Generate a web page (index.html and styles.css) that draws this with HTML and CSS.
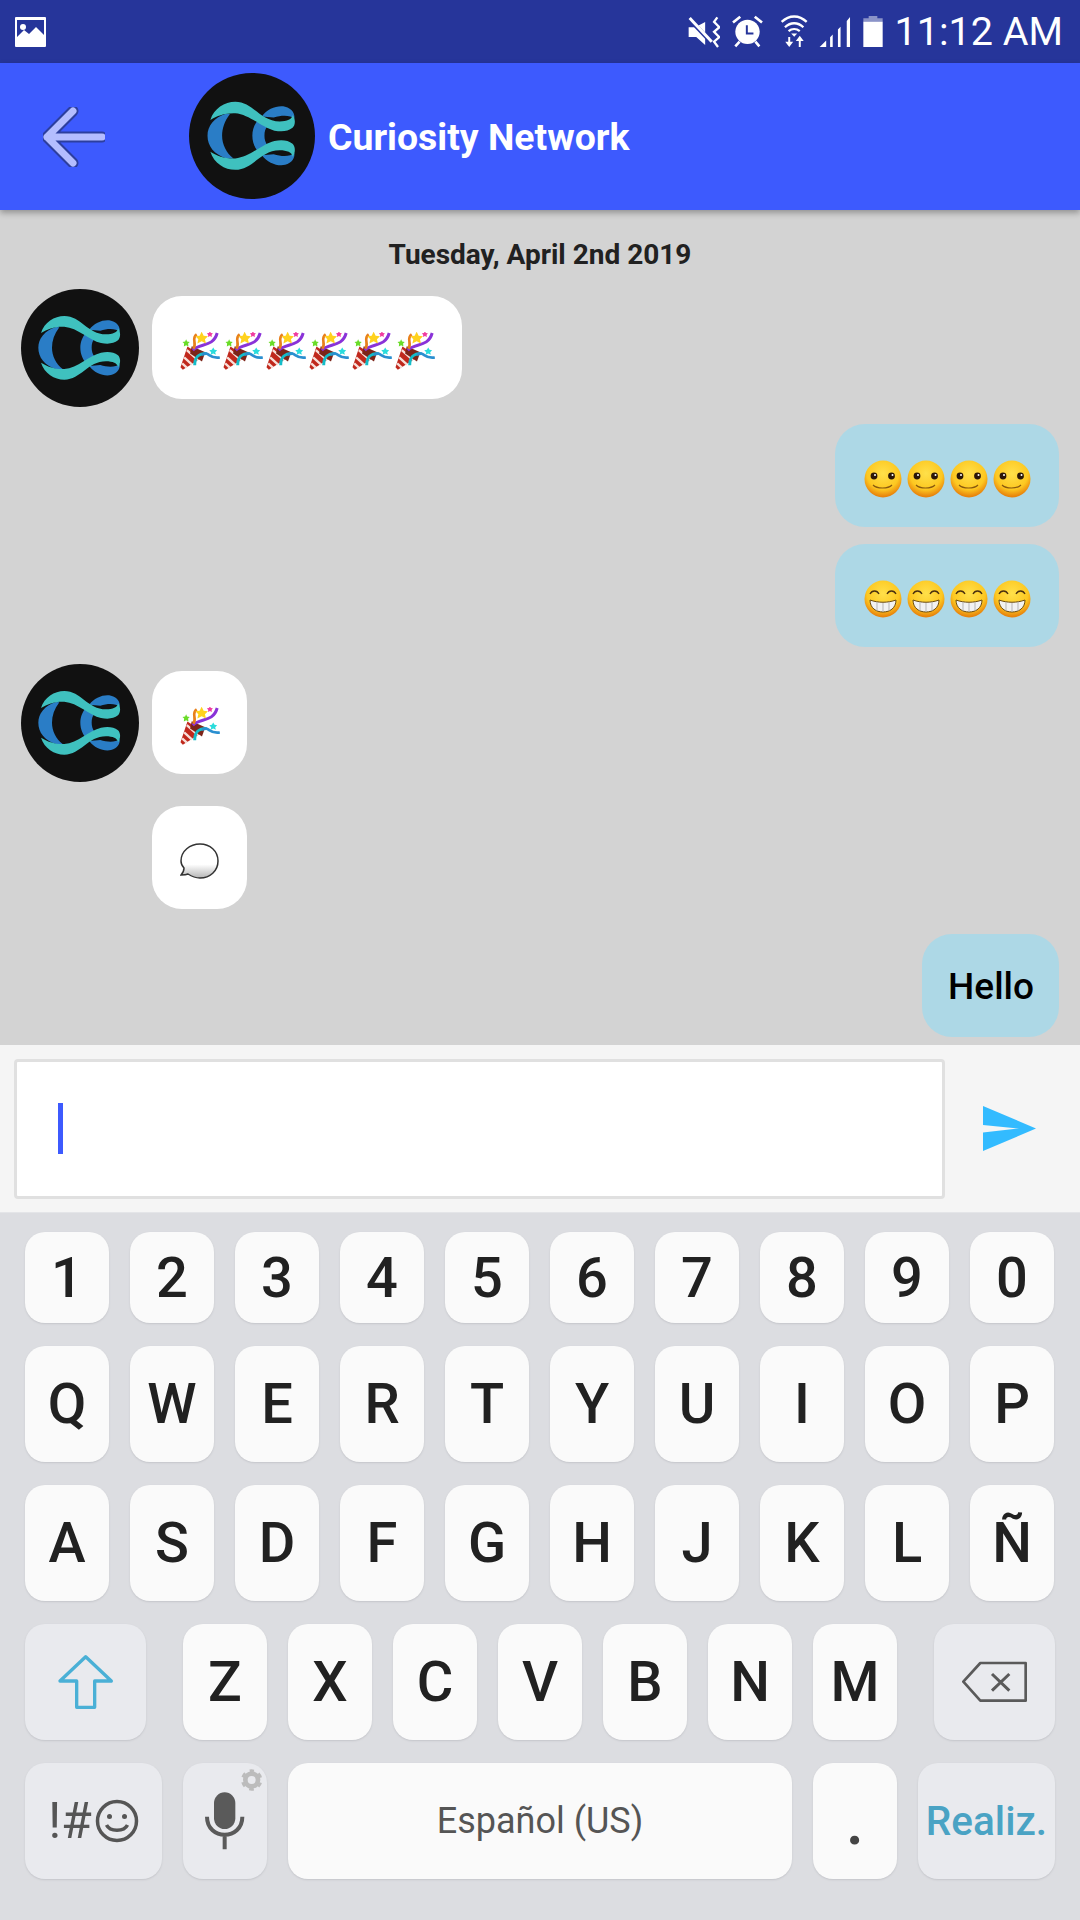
FILE: index.html
```html
<!DOCTYPE html>
<html lang="en">
<head>
    <meta charset="UTF-8">
    <meta name="viewport" content="width=device-width, initial-scale=1.0">
    <title>Curiosity Network</title>
    <link rel="stylesheet" href="styles.css">
</head>
<body>
    <svg class="defs" width="0" height="0">
        <defs>
            <radialGradient id="face" cx="50%" cy="35%" r="62%">
                <stop offset="0" stop-color="#ffe04a"/>
                <stop offset="0.7" stop-color="#fdc821"/>
                <stop offset="1" stop-color="#e8840c"/>
            </radialGradient>
            <linearGradient id="ball" x1="0" y1="0" x2="0" y2="1">
                <stop offset="0.6" stop-color="#ffffff"/>
                <stop offset="1" stop-color="#b5b5b5"/>
            </linearGradient>
            <g id="logo-half">
                <path d="M205 122C220 100 250 90 270 95C290 100 298 115 296 128C285 118 260 118 238 125Z" fill="#2a7dc6"/>
                <path d="M60 132C70 100 100 81 130 81C180 81 200 136 255 136C275 136 290 130 291 118C300 130 299 146 291 154C278 164 262 166 240 162C205 154 170 116 130 113C100 112 80 120 60 132Z" fill="#3fc1bf"/>
            </g>
            <symbol id="logo" viewBox="0 0 354 354">
                <circle cx="177" cy="177" r="177" fill="#111111"/>
                <path d="M105 114C70 125 52 150 52 176C52 205 70 228 105 240L125 240C105 225 93 200 93 176C93 155 100 135 115 115Z" fill="#2a7dc6"/>
                <path d="M200 125C185 140 178 158 178 176C178 195 185 212 200 228L222 205C214 195 212 185 212 176C212 165 214 155 222 148Z" fill="#2a7dc6"/>
                <use href="#logo-half"/>
                <use href="#logo-half" transform="translate(0 353) scale(1 -1)"/>
            </symbol>
            <symbol id="popper" viewBox="540 185 120 115">
                <path d="M541 292L562 229L610 260L548 299Z" fill="#c0281c"/>
                <path d="M552 262L576 284M560 240L594 270M546 280L560 293" stroke="#f8e0da" stroke-width="7" fill="none"/>
                <path d="M575 228L616 246L606 274L570 250Z" fill="#7c2418"/>
                <path d="M584 286C584 265 590 250 620 250" stroke="#14bcc8" stroke-width="9" fill="none"/>
                <path d="M606 254C628 240 625 268 660 262" stroke="#2a8fd0" stroke-width="8" fill="none"/>
                <path d="M578 240C600 218 640 232 652 188" stroke="#8a32d8" stroke-width="9" fill="none"/>
                <path d="M590 192C572 205 592 218 580 236" stroke="#e8801c" stroke-width="8" fill="none"/>
                <path d="M605 184L611 196L624 198L615 207L618 220L605 213L592 220L595 207L586 198L599 196Z" fill="#ffd21e"/>
                <path d="M630 183L633 188L639 189L635 194L636 200L630 197L624 200L625 194L621 189L627 188Z" fill="#f03ca0"/>
                <path d="M558 207L561 214L569 215L564 220L565 229L558 225L551 229L552 220L547 215L555 214Z" fill="#6adc28"/>
                <path d="M640 232L644 239L652 240L646 246L648 254L640 250L632 254L634 246L628 240L636 239Z" fill="#2adcdc"/>
            </symbol>
            <symbol id="smile" viewBox="0 0 38 38">
                <circle cx="19" cy="19" r="18.5" fill="url(#face)"/>
                <circle cx="10" cy="16" r="3.4" fill="#2a1608"/>
                <circle cx="27.500" cy="16" r="3.4" fill="#2a1608"/>
                <circle cx="11" cy="15" r="1" fill="#ffffff"/>
                <circle cx="28.500" cy="15" r="1" fill="#ffffff"/>
                <path d="M9 25C13 29 24 29 28 25" stroke="#8a5a10" stroke-width="1.2" fill="none"/>
            </symbol>
            <symbol id="grin" viewBox="0 0 38 38">
                <circle cx="19" cy="19" r="18.5" fill="url(#face)"/>
                <path d="M6 14C8 10 13 10 15 14M23 14C25 10 30 10 32 14" stroke="#4a3010" stroke-width="1.3" fill="none"/>
                <path d="M6 20C14 23 24 23 32 20C32 28 26 32 19 32C12 32 6 28 6 20Z" fill="#f2f2f2" stroke="#6a4a10" stroke-width="1"/>
                <path d="M13 22V31M19 23V32M25 22V31" stroke="#b5b5b5" stroke-width="1"/>
            </symbol>
            <symbol id="balloon" viewBox="0 0 40 36">
                <path d="M20 1C30 1 38 8 38 18C38 28 30 35 20 35C15 35 11 33 8 31C6 32 3 32 1 32C3 30 4 28 4 25C2 23 1 21 1 18C1 8 10 1 20 1Z" fill="url(#ball)" stroke="#333333" stroke-width="1.500"/>
            </symbol>
        </defs>
    </svg>

    <div class="status-bar">
        <svg class="status-left" viewBox="0 0 31 30">
            <path d="M0 1Q0 0 1 0H30Q31 0 31 1V29Q31 30 30 30H1Q0 30 0 29ZM2 3V20L9 13L14 17L21 10L29 18V3Z" fill="#ffffff"/>
            <circle cx="8" cy="10" r="3" fill="#ffffff"/>
        </svg>
        <div class="status-right">
            <svg class="si-mute" viewBox="80 45 100 95">
                <path d="M85 78H105L135 62V132L108 108H85Z" fill="#ffffff"/>
                <path d="M84 50L158 128" stroke="#26359a" stroke-width="13"/>
                <path d="M88 50L155 122" stroke="#ffffff" stroke-width="9"/>
                <path d="M172 48L162 62L178 78L162 92L178 108L162 122L174 138" stroke="#ffffff" stroke-width="7" fill="none"/>
            </svg>
            <svg class="si-alarm" viewBox="215 42 94 98">
                <circle cx="262" cy="92" r="37" fill="#ffffff"/>
                <path d="M260 72V97H280" stroke="#26359a" stroke-width="6" fill="none"/>
                <path d="M218 64L240 46M306 64L284 46M225 136L238 122M298 136L286 122" stroke="#ffffff" stroke-width="8"/>
            </svg>
            <svg class="si-wifi" viewBox="360 42 85 98">
                <path d="M365 62C388 40 418 40 441 62M375 78C392 62 414 62 431 78M386 90C396 82 410 82 420 90" stroke="#ffffff" stroke-width="7" fill="none"/>
                <path d="M394 97H412L403 107Z" fill="#ffffff"/>
                <path d="M388 108V130M420 112V138" stroke="#ffffff" stroke-width="6"/>
                <path d="M376 122H400L388 138ZM408 120H432L420 104Z" fill="#ffffff"/>
            </svg>
            <svg class="si-signal" viewBox="478 44 98 96">
                <path d="M480 138L500 118V138Z" fill="#ffffff"/>
                <path d="M512 138V108L520 100V138ZM536 138V84L544 76V138ZM563 138V58L573 46V138Z" fill="#ffffff"/>
            </svg>
            <svg class="si-battery" viewBox="610 45 58 93">
                <path d="M626 45H652V52H668V62H610V52H626Z" fill="#8a93c8"/>
                <rect x="610" y="62" width="58" height="76" fill="#ffffff"/>
            </svg>
            <span class="clock">11:12 AM</span>
        </div>
    </div>

    <header class="app-bar">
        <svg class="back" viewBox="0 0 62 60">
            <path d="M30 4L4 30L30 56M4 30H59" stroke="#2d3f9e" stroke-width="11" fill="none" stroke-linejoin="round" stroke-linecap="round"/>
            <path d="M30 4L4 30L30 56M4 30H59" stroke="#b4bdff" stroke-width="7" fill="none" stroke-linejoin="round" stroke-linecap="round"/>
        </svg>
        <svg class="bar-logo"><use href="#logo"/></svg>
        <h1 class="bar-title">Curiosity Network</h1>
    </header>

    <main class="chat">
        <div class="chat-date">Tuesday, April 2nd 2019</div>

        <div class="row-left">
            <svg class="avatar"><use href="#logo"/></svg>
            <div class="bubble bubble-in">
                <svg class="emoji-p"><use href="#popper"/></svg>
                <svg class="emoji-p"><use href="#popper"/></svg>
                <svg class="emoji-p"><use href="#popper"/></svg>
                <svg class="emoji-p"><use href="#popper"/></svg>
                <svg class="emoji-p"><use href="#popper"/></svg>
                <svg class="emoji-p"><use href="#popper"/></svg>
            </div>
        </div>

        <div class="row-right">
            <div class="bubble bubble-out">
                <svg class="emoji-f"><use href="#smile"/></svg>
                <svg class="emoji-f"><use href="#smile"/></svg>
                <svg class="emoji-f"><use href="#smile"/></svg>
                <svg class="emoji-f"><use href="#smile"/></svg>
            </div>
        </div>

        <div class="row-right">
            <div class="bubble bubble-out">
                <svg class="emoji-f"><use href="#grin"/></svg>
                <svg class="emoji-f"><use href="#grin"/></svg>
                <svg class="emoji-f"><use href="#grin"/></svg>
                <svg class="emoji-f"><use href="#grin"/></svg>
            </div>
        </div>

        <div class="row-left">
            <svg class="avatar"><use href="#logo"/></svg>
            <div class="bubble bubble-in">
                <svg class="emoji-p"><use href="#popper"/></svg>
            </div>
        </div>

        <div class="row-left row-noavatar">
            <div class="bubble bubble-in">
                <svg class="emoji-p"><use href="#balloon"/></svg>
            </div>
        </div>

        <div class="row-right row-last">
            <div class="bubble bubble-out bubble-text">Hello</div>
        </div>
    </main>

    <div class="composer">
        <div class="composer-input"><span class="caret"></span></div>
        <svg class="send" viewBox="0 0 53 45">
            <path d="M0 0L53 22.500L0 45V26.500L36 22.500L0 19Z" fill="#33bbff"/>
        </svg>
    </div>

    <div class="keyboard">
        <div class="key-row key-row-digits">
            <div class="key">1</div><div class="key">2</div><div class="key">3</div><div class="key">4</div><div class="key">5</div>
            <div class="key">6</div><div class="key">7</div><div class="key">8</div><div class="key">9</div><div class="key">0</div>
        </div>
        <div class="key-row">
            <div class="key">Q</div><div class="key">W</div><div class="key">E</div><div class="key">R</div><div class="key">T</div>
            <div class="key">Y</div><div class="key">U</div><div class="key">I</div><div class="key">O</div><div class="key">P</div>
        </div>
        <div class="key-row">
            <div class="key">A</div><div class="key">S</div><div class="key">D</div><div class="key">F</div><div class="key">G</div>
            <div class="key">H</div><div class="key">J</div><div class="key">K</div><div class="key">L</div><div class="key">Ñ</div>
        </div>
        <div class="key-row">
            <div class="key key-fn key-shift">
                <svg viewBox="75 72 363 348">
                    <path d="M257 170L334 243H284V322H230V243H180Z" stroke="#4ab0d6" stroke-width="10" fill="none" stroke-linejoin="round"/>
                </svg>
            </div>
            <div class="key">Z</div><div class="key">X</div><div class="key">C</div><div class="key">V</div><div class="key">B</div><div class="key">N</div><div class="key">M</div>
            <div class="key key-fn key-shift">
                <svg viewBox="462 72 363 348">
                    <path d="M601 189H737V302H601L550 245Z" stroke="#5a5a5a" stroke-width="8" fill="none" stroke-linejoin="round"/>
                    <path d="M636 222L688 272M688 222L636 272" stroke="#5a5a5a" stroke-width="9"/>
                </svg>
            </div>
        </div>
        <div class="key-row">
            <div class="key key-fn key-wide key-symbols">
                <span class="symbols-text">!#</span>
                <svg class="symbols-face" viewBox="0 0 44 44">
                    <circle cx="22" cy="22" r="19.500" stroke="#555555" stroke-width="3.500" fill="none"/>
                    <circle cx="14.500" cy="17.500" r="2.500" fill="#555555"/>
                    <circle cx="29.500" cy="17.500" r="2.500" fill="#555555"/>
                    <path d="M11.500 26C15 33 29 33 32.500 26" stroke="#555555" stroke-width="3.500" fill="none"/>
                </svg>
            </div>
            <div class="key key-fn">
                <svg viewBox="549 489 252 348">
                    <rect x="642" y="577" width="64" height="110" rx="32" fill="#5a5a5a"/>
                    <path d="M621 650C621 722 727 722 727 650M674 705V748" stroke="#5a5a5a" stroke-width="12" fill="none"/>
                    <circle cx="755" cy="540" r="19" stroke="#bcbcbc" stroke-width="14" fill="none"/>
                    <circle cx="755" cy="540" r="28" stroke="#bcbcbc" stroke-width="8" fill="none" stroke-dasharray="14 15.300" stroke-dashoffset="7" transform="rotate(-90 755 540)"/>
                </svg>
            </div>
            <div class="key key-space">Español (US)</div>
            <div class="key key-dot">.</div>
            <div class="key key-fn key-wide key-done">Realiz.</div>
        </div>
    </div>
</body>
</html>
```

FILE: styles.css
```css
* {
    box-sizing: border-box;
}

html, body {
    margin: 0;
    padding: 0;
}

body {
    width: 1080px;
    height: 1920px;
    overflow: hidden;
    font-family: Roboto, "Liberation Sans", sans-serif;
    display: flex;
    flex-direction: column;
    background-color: #d3d3d3;
}

.defs {
    position: absolute;
}

/* status bar */
.status-bar {
    height: 63px;
    flex: none;
    background-color: #26359a;
    display: flex;
    align-items: center;
    justify-content: space-between;
    padding: 0 17px 0 15px;
}

.status-left {
    width: 31px;
    height: 30px;
}

.status-right {
    display: flex;
    align-items: center;
}

.si-mute { width: 33px; height: 32px; }
.si-alarm { width: 31px; height: 33px; margin-left: 12px; }
.si-wifi { width: 28px; height: 33px; margin-left: 17px; }
.si-signal { width: 32px; height: 32px; margin-left: 11px; }
.si-battery { width: 20px; height: 31px; margin-left: 12px; }

.clock {
    color: #fff;
    font-size: 39.5px;
    line-height: 44px;
    margin-left: 12px;
}

/* app bar */
.app-bar {
    height: 147px;
    flex: none;
    background-color: #3d5afe;
    display: flex;
    align-items: center;
    padding-left: 43px;
    box-shadow: 0 3px 6px rgba(0, 0, 0, 0.3);
    position: relative;
}

.back {
    width: 62px;
    height: 60px;
}

.bar-logo {
    width: 126px;
    height: 126px;
    margin: 0 0 1px 84px;
}

.bar-title {
    margin: 0 0 0 13px;
    color: #fff;
    font-size: 37.4px;
    font-weight: 700;
}

/* chat */
.chat {
    height: 835px;
    flex: none;
    overflow: hidden;
    padding: 29px 21px 0;
}

.chat-date {
    height: 30px;
    line-height: 32px;
    margin-bottom: 20px;
    text-align: center;
    font-size: 28px;
    font-weight: 700;
    color: #212121;
}

.row-left,
.row-right {
    display: flex;
    margin-bottom: 17px;
}

.row-right {
    justify-content: flex-end;
}

.row-noavatar {
    padding-left: 131px;
}

.row-last {
    padding-top: 8px;
}

.avatar {
    width: 118px;
    height: 118px;
    flex: none;
    margin-right: 13px;
}

.bubble {
    height: 103px;
    border-radius: 30px;
    display: flex;
    align-items: center;
    padding-top: 6px;
}

.row-left .bubble {
    margin-top: 7px;
}

.bubble-in {
    background-color: #fff;
    gap: 3px;
    padding-left: 28px;
    padding-right: 27px;
}

.bubble-out {
    background-color: #add8e6;
    gap: 5px;
    padding-left: 29px;
    padding-right: 28px;
}

.bubble-text {
    font-size: 37px;
    font-weight: 500;
    color: #000;
    padding: 2px 25px 0 26px;
}

.emoji-p {
    width: 40px;
    height: 38px;
}

.emoji-f {
    width: 38px;
    height: 38px;
}

/* composer */
.composer {
    height: 167px;
    flex: none;
    background-color: #f5f5f5;
    display: flex;
    align-items: center;
    padding: 0 44px 0 14px;
    justify-content: space-between;
}

.composer-input {
    width: 931px;
    height: 140px;
    background-color: #fff;
    border: 3px solid #e0e0e0;
    border-radius: 4px;
    display: flex;
    align-items: center;
    padding-left: 41px;
}

.caret {
    width: 5px;
    height: 51px;
    background-color: #3d5afe;
}

.send {
    width: 53px;
    height: 45px;
}

/* keyboard */
.keyboard {
    flex: 1;
    background-color: #dcdde1;
    border-top: 1px solid #e4e5e8;
    padding: 19px 25px 0;
    display: flex;
    flex-direction: column;
    gap: 23px;
}

.key-row {
    height: 116px;
    display: flex;
    gap: 21px;
}

.key-row-digits {
    height: 91px;
}

.key {
    width: 84px;
    flex: none;
    background-color: #fafafa;
    border-radius: 20px;
    box-shadow: 0 1px 2px #c4c5ca;
    display: flex;
    align-items: center;
    justify-content: center;
    font-size: 56px;
    font-weight: 500;
    color: #212121;
}

.key svg {
    width: 100%;
    height: 100%;
}

.key-fn {
    background-color: #e9eaee;
}

.key-shift {
    width: 121px;
}

.key-shift:first-child {
    margin-right: 16px;
}

.key-shift:last-child {
    margin-left: 16px;
}

.key-wide {
    width: 137px;
}

.key-symbols {
    gap: 3px;
}

.symbols-text {
    font-size: 50px;
    font-weight: 400;
    color: #555;
}

.key .symbols-face {
    width: 44px;
    height: 44px;
}

.key-space {
    width: 504px;
    font-size: 36px;
    font-weight: 400;
    color: #555;
}

.key-dot {
    font-size: 66px;
    color: #444;
}

.key-done {
    font-size: 40.5px;
    font-weight: 500;
    color: #4aa3c4;
}
```
